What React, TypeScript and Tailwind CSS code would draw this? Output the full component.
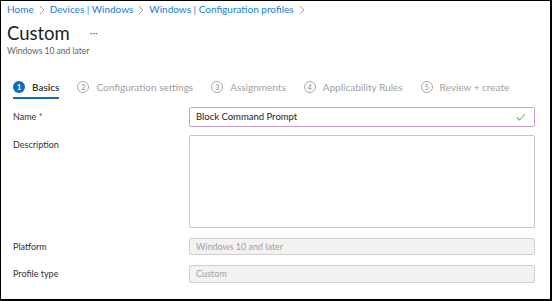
import React from "react";

const Chevron = () => (
  <svg width="8" height="10" viewBox="0 0 8 10" className="mx-[4px]">
    <path d="M2 1 L6 5 L2 9" fill="none" stroke="#a0a0a0" strokeWidth="1" />
  </svg>
);

const Step = ({ n, label, active }: { n: number; label: string; active?: boolean }) => (
  <div className="flex flex-col">
    <div className="flex items-center gap-[7px] h-[20px]">
      {active ? (
        <div className="w-[12px] h-[12px] rounded-full bg-[#0f6cbd] text-white text-[8px] font-bold flex items-center justify-center leading-none">
          {n}
        </div>
      ) : (
        <div className="w-[12px] h-[12px] rounded-full border border-[#a8a8a8] text-[#8a8a8a] text-[7px] flex items-center justify-center leading-none">
          {n}
        </div>
      )}
      <span className={active ? "text-[#323130] font-semibold" : "text-[#a19f9d]"}>{label}</span>
    </div>
    <div className={active ? "h-[2px] bg-[#0f6cbd]" : "h-[2px]"} />
  </div>
);

export default function App() {
  return (
    <div
      className="w-[552px] h-[301px] bg-white border-l border-t border-r-2 border-b-2 border-black overflow-hidden text-[#323130]"
      style={{ fontFamily: 'Lato, "Noto Sans", sans-serif' }}
    >
      <div className="pl-[6px] pt-[1px] flex items-center text-[10px] text-[#1a7bd6] h-[16px]">
        <span>Home</span>
        <Chevron />
        <span>Devices | Windows</span>
        <Chevron />
        <span>Windows | Configuration profiles</span>
        <Chevron />
      </div>
      <div className="pl-[6px] flex items-end mt-[5px] h-[23px]">
        <span className="text-[18.5px] leading-[23px] text-[#201f1e]">Custom</span>
        <span className="ml-[20px] mb-[8px] text-[10px] leading-none text-[#605e5c]">···</span>
      </div>
      <div className="pl-[6px] text-[8.5px] text-[#605e5c] leading-[12px] mt-[0px]">Windows 10 and later</div>

      <div className="flex pl-[12px] mt-[20px] text-[10px] gap-[18px]">
        <Step n={1} label="Basics" active />
        <Step n={2} label="Configuration settings" />
        <Step n={3} label="Assignments" />
        <Step n={4} label="Applicability Rules" />
        <Step n={5} label="Review + create" />
      </div>

      <div className="pl-[12px] pr-[15px] mt-[8px] text-[9px] flex flex-col">
        <div className="flex items-center h-[20px]">
          <div className="w-[176px] text-[#323130]">
            Name <span className="text-[#a4262c]">*</span>
          </div>
          <div className="flex-1 h-[20px] border border-[#c8a2d6] rounded-[2px] flex items-center px-[6px] justify-between">
            <span className="text-[#201f1e] text-[9.5px]">Block Command Prompt</span>
            <svg width="10" height="8" viewBox="0 0 10 8" className="mr-[2px]">
              <path d="M1 4.5 L3.5 7 L9 1" fill="none" stroke="#7cb342" strokeWidth="1.1" />
            </svg>
          </div>
        </div>
        <div className="flex mt-[8px]">
          <div className="w-[176px] pt-[3px]">Description</div>
          <div className="flex-1 h-[93px] border border-[#c8c6c4] rounded-[2px]" />
        </div>
        <div className="flex items-center mt-[10px] h-[17px]">
          <div className="w-[176px]">Platform</div>
          <div className="flex-1 h-[17px] border border-[#d2d0ce] bg-[#f3f2f1] rounded-[2px] flex items-center px-[6px] text-[#a19f9d]">
            Windows 10 and later
          </div>
        </div>
        <div className="flex items-center mt-[10px] h-[18px]">
          <div className="w-[176px]">Profile type</div>
          <div className="flex-1 h-[18px] border border-[#d2d0ce] bg-[#f3f2f1] rounded-[2px] flex items-center px-[6px] text-[#a19f9d]">
            Custom
          </div>
        </div>
      </div>
    </div>
  );
}
